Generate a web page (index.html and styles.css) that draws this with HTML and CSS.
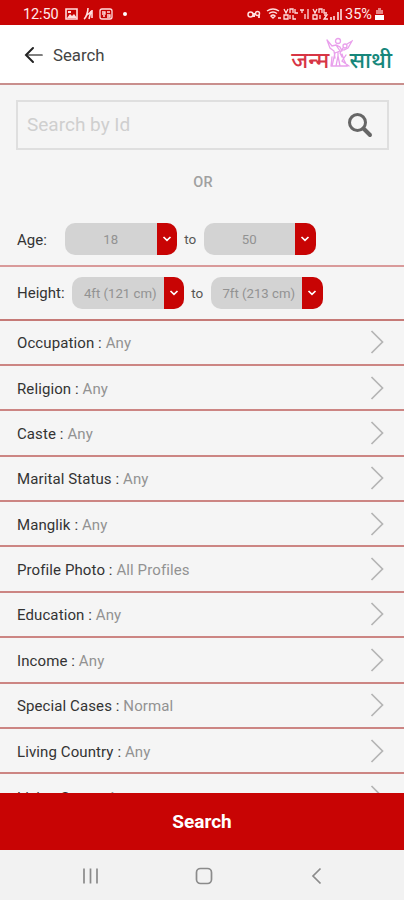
FILE: index.html
```html
<!DOCTYPE html>
<html lang="en">
<head>
<meta charset="utf-8">
<title>Search</title>
<link rel="stylesheet" href="styles.css">
</head>
<body>
<div class="status">
  <span class="time">12:50</span>
  <svg class="status-left" width="70" height="16" viewBox="0 0 70 16" fill="none" stroke="#ffdede">
    <path d="M1 3h11v10H1z" stroke-width="1.6"/><path d="M2 12l3-4 2 2 2-2 3 4zM3 5h3v2H3z" fill="#ffdede" stroke="none"/>
    <path d="M19 13c2-1 4-7 4-11M22 9l5-4M24 13l2-8M27 4v8" stroke-width="1.6"/>
    <rect x="35" y="3" width="12" height="10" rx="2" stroke-width="1.3"/><path d="M37 6h3v2h-3M42 6h3M38 10h2M42 9h3v2h-3" stroke-width="1.3"/>
    <circle cx="60" cy="8" r="2" fill="#fff" stroke="none"/>
  </svg>
  <svg class="status-right" width="97" height="16" viewBox="0 0 97 16" fill="none" stroke="#ffdede" stroke-width="1.5">
    <circle cx="3.500" cy="8.500" r="2.500"/><circle cx="10.500" cy="7.500" r="2"/><path d="M6 8h3M12 9v3M6 10h2" stroke-width="1.800"/>
    <path d="M20 5q6-4 12 0M22 7.500q4-3 8 0M24 10q2-2 4 0l-2 2zM31 12h3"/>
    <path d="M37 3l2 4 2-4M43 7V3h3v4M48 3v4h3M37 9v4h4V9zM43 9v4M46 9v4h3M53 4h4M55 4v3M58 13V8M61 13V3" stroke-width="1.3"/>
    <path d="M66 3l2 4 2-4M72 7V3h3v4M77 3v4h3M66 9v4h4V9zM73 9v4M77 9h3l-3 4h4" stroke-width="1.3"/>
    <path d="M84 14v-3M87 14v-4M91 14V6M94 14V3" stroke-width="1.6"/>
  </svg>
  <span class="percent">35%</span>
  <svg class="battery" width="9" height="14" viewBox="0 0 9 14"><path d="M3 1h3v2h2v4H1V3h2z" fill="#e98585"/><path d="M0 8h9v5H0z" fill="#fff"/></svg>
</div>
<header class="header">
  <svg width="20" height="18" viewBox="0 0 20 18" fill="none" stroke-linecap="round"><path d="M3 9h15" stroke="#555" stroke-width="1.700"/><path d="M9 2L2 9l7 7" stroke="#222" stroke-width="2"/></svg>
  <h1>Search</h1>
  <div class="logo">
    <span class="logo-a">जन्म</span>
    <svg width="28" height="33" viewBox="0 0 28 33" fill="none" stroke="#e9a0ec" stroke-width="1.300" stroke-linecap="round">
      <circle cx="13" cy="4" r="2.500"/><circle cx="20" cy="9" r="2"/>
      <path d="M2 3l3 8 4 3 1 7M2 3l5 6 4-1 4 2 2 4M11 8l4 6-5 2M22 7l5-3-4 7-4 2-3-1M18 11l-3 5 2 4M10 16L7 29h4l2-10 2 10h3M17 17l2 6 3 6H11M21 18l-4 6 7 5M7 20l-1 9M13 15v5"/>
    </svg>
    <span class="logo-b">साथी</span>
  </div>
</header>
<main class="content">
  <div class="searchbox"><span>Search by Id</span>
    <svg width="26" height="26" viewBox="0 0 26 26" fill="none" stroke="#666"><circle cx="10.500" cy="10.500" r="8" stroke-width="3"/><path d="M16.500 16.500l6.500 6.500" stroke-width="4" stroke-linecap="round"/></svg>
  </div>
  <div class="or">OR</div>
  <div class="range age"><span class="label">Age:</span>
    <div class="select"><span>18</span><i><svg width="10" height="8" viewBox="0 0 10 8"><path d="M1.500 2L5 5.300 8.500 2"/></svg></i></div>
    <span class="to">to</span>
    <div class="select"><span>50</span><i><svg width="10" height="8" viewBox="0 0 10 8"><path d="M1.500 2L5 5.300 8.500 2"/></svg></i></div>
  </div>
  <div class="range height"><span class="label">Height:</span>
    <div class="select"><span>4ft (121 cm)</span><i><svg width="10" height="8" viewBox="0 0 10 8"><path d="M1.500 2L5 5.300 8.500 2"/></svg></i></div>
    <span class="to">to</span>
    <div class="select"><span>7ft (213 cm)</span><i><svg width="10" height="8" viewBox="0 0 10 8"><path d="M1.500 2L5 5.300 8.500 2"/></svg></i></div>
  </div>
  <div class="row"><p>Occupation : <span>Any</span></p><svg class="chev" width="14" height="24" viewBox="0 0 14 24"><path d="M1.500 1L12.500 12 1.500 23"/></svg></div>
  <div class="row"><p>Religion : <span>Any</span></p><svg class="chev" width="14" height="24" viewBox="0 0 14 24"><path d="M1.500 1L12.500 12 1.500 23"/></svg></div>
  <div class="row"><p>Caste : <span>Any</span></p><svg class="chev" width="14" height="24" viewBox="0 0 14 24"><path d="M1.500 1L12.500 12 1.500 23"/></svg></div>
  <div class="row"><p>Marital Status : <span>Any</span></p><svg class="chev" width="14" height="24" viewBox="0 0 14 24"><path d="M1.500 1L12.500 12 1.500 23"/></svg></div>
  <div class="row"><p>Manglik : <span>Any</span></p><svg class="chev" width="14" height="24" viewBox="0 0 14 24"><path d="M1.500 1L12.500 12 1.500 23"/></svg></div>
  <div class="row"><p>Profile Photo : <span>All Profiles</span></p><svg class="chev" width="14" height="24" viewBox="0 0 14 24"><path d="M1.500 1L12.500 12 1.500 23"/></svg></div>
  <div class="row"><p>Education : <span>Any</span></p><svg class="chev" width="14" height="24" viewBox="0 0 14 24"><path d="M1.500 1L12.500 12 1.500 23"/></svg></div>
  <div class="row"><p>Income : <span>Any</span></p><svg class="chev" width="14" height="24" viewBox="0 0 14 24"><path d="M1.500 1L12.500 12 1.500 23"/></svg></div>
  <div class="row"><p>Special Cases : <span>Normal</span></p><svg class="chev" width="14" height="24" viewBox="0 0 14 24"><path d="M1.500 1L12.500 12 1.500 23"/></svg></div>
  <div class="row"><p>Living Country : <span>Any</span></p><svg class="chev" width="14" height="24" viewBox="0 0 14 24"><path d="M1.500 1L12.500 12 1.500 23"/></svg></div>
  <div class="row"><p>Living State : <span>Any</span></p><svg class="chev" width="14" height="24" viewBox="0 0 14 24"><path d="M1.500 1L12.500 12 1.500 23"/></svg></div>
</main>
<button class="submit">Search</button>
<nav class="nav">
  <svg width="18" height="18" viewBox="0 0 18 18"><path d="M2 1.500v15M8.500 1.500v15M15 1.500v15"/></svg>
  <svg width="18" height="18" viewBox="0 0 18 18"><rect x="1.500" y="1.500" width="15" height="15" rx="4"/></svg>
  <svg width="18" height="18" viewBox="0 0 18 18"><path d="M12.500 1.500L5 9l7.500 7.500"/></svg>
</nav>
</body>
</html>
```
FILE: styles.css
```css
* { box-sizing: border-box; }
body {
  margin: 0; width: 404px; height: 900px; overflow: hidden;
  display: flex; flex-direction: column;
  font-family: Roboto, "Noto Sans", sans-serif; background: #f5f5f5; color: #333;
}
svg { display: block; flex: none; }
.status { height: 25px; flex: none; background: #c80404; color: #ffeaea; display: flex; align-items: center; padding: 3px 20px 0 23px; font-size: 14.500px; }
.time { width: 42px; letter-spacing: -.1px; }
.status-right { margin-left: auto; margin-right: 1px; }
.percent { width: 29px; font-size: 14.500px; letter-spacing: 0; }
.battery { margin-left: 1px; }
.header { height: 60px; flex: none; background: #fff; border-bottom: 2px solid #c98f8d; display: flex; align-items: center; padding: 2px 12px 0 24px; }
h1 { margin: 0 0 0 9px; font-size: 16.800px; font-weight: 400; color: #444; }
.logo { margin-left: auto; display: flex; align-items: center; font-family: "Noto Sans", "Noto Sans Devanagari", "Lohit Devanagari", sans-serif; font-size: 22.500px; font-weight: 500; line-height: 30px; height: 34px; }
.logo span { padding-top: 10px; white-space: nowrap; }
.logo svg { margin: -4px -4px 0 -4px; }
.logo-a { color: #d73545; }
.logo-b { color: #16877b; }
.content { height: 708px; flex: none; overflow: hidden; }
.searchbox { height: 50px; margin: 15px 15px 0 16px; border: 2px solid #dfdfdf; display: flex; align-items: center; justify-content: space-between; padding: 0 14px 2px 9px; color: #cfcfcf; font-size: 19px; }
.searchbox svg { margin-top: 2px; }
.or { height: 63px; line-height: 65px; text-align: center; font-size: 14.500px; font-weight: 500; color: #a0a0a0; padding-left: 2px; letter-spacing: .3px; }
.range { display: flex; align-items: center; padding-left: 17px; border-bottom: 2px solid #d99a9a; font-size: 15px; }
.age { height: 54px; }
.height { height: 53.500px; border-bottom-color: #c67a77; }
.label { letter-spacing: 0; padding-top: 1px; }
.age .label { width: 48px; }
.height .label { width: 55px; }
.select { width: 112px; height: 32px; flex: none; border-radius: 10px; overflow: hidden; display: flex; background: #d3d3d3; color: #929292; font-size: 13.200px; }
.select span { flex: 1; display: flex; align-items: center; justify-content: center; white-space: nowrap; padding-top: 1px; }
.height .select span { padding-left: 5px; }
.select i { width: 20.500px; background: #c80404; display: flex; align-items: center; justify-content: center; }
.select path { fill: none; stroke: #fff; stroke-width: 1.700; }
.to { width: 26.500px; text-align: center; font-size: 13.500px; color: #555; }
.row { height: 45.380px; display: flex; align-items: center; justify-content: space-between; padding: 2px 20px 0 17px; border-bottom: 2px solid #cc8583; font-size: 15px; }
.row p { margin: 0; letter-spacing: .1px; }
.row span { color: #929292; }
.row .chev { margin-top: -2px; }
.row:last-child { padding-top: 4px; }
.chev path { fill: none; stroke: #b4b4b4; stroke-width: 1.700; }
.submit { height: 56.500px; flex: none; border: 0; padding: 0; background: #c80404; color: #fff; font: 700 19px Roboto, sans-serif; }
.nav { flex: 1; background: #f2f2f2; display: flex; align-items: center; justify-content: space-between; padding: 2px 78px 0 82px; }
.nav path, .nav rect { fill: none; stroke: #8b8b8b; stroke-width: 1.700; }
```
